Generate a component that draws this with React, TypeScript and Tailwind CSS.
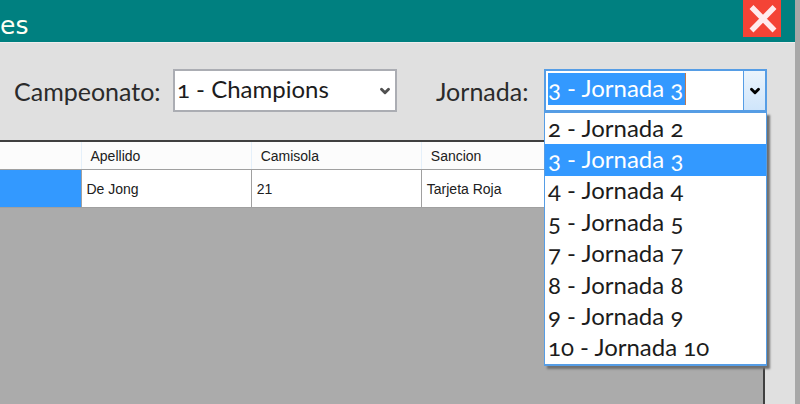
import { ChevronDown } from "lucide-react";

const columns = ["Apellido", "Camisola", "Sancion"];
const player = ["De Jong", "21", "Tarjeta Roja"];
const rounds = [2, 3, 4, 5, 7, 8, 9, 10];
const selectedRound = 3;

function TitleBar() {
  return (
    <header className="flex h-[42px] items-start justify-between bg-[#008080] pr-[14px]">
      <h1 className="pt-[10px] font-['DejaVu_Sans',sans-serif] text-[25px] leading-8 text-[#fffff4]">es</h1>
      <button
        type="button"
        aria-label="Cerrar"
        className="flex h-[37px] w-[38px] items-center justify-center bg-[#f44336]"
      >
        <svg viewBox="0 0 38 37" className="h-full w-full" fill="none" stroke="#ffebee" strokeWidth="5.5">
          <path d="M8.5 7 31.5 30.5M31.5 7 8.5 30.5" />
        </svg>
      </button>
    </header>
  );
}

function ChampionshipField() {
  return (
    <div className="flex items-center gap-[11px]">
      <label htmlFor="campeonato" className="w-[148px] whitespace-nowrap">Campeonato:</label>
      <div className="grid w-[224px] items-center">
        <select
          id="campeonato"
          className="col-start-1 row-start-1 h-[43px] appearance-none border-2 border-[#abadb3] bg-white px-[2px] pb-[3px] text-[24px] text-[#1c1c1c] outline-none"
        >
          <option>1 - Champions</option>
        </select>
        <ChevronDown
          className="pointer-events-none col-start-1 row-start-1 mr-[5px] size-[14px] justify-self-end text-[#505050]"
          strokeWidth={5}
        />
      </div>
    </div>
  );
}

function RoundField() {
  return (
    <div className="flex items-center gap-[11px]">
      <label htmlFor="jornada" className="w-[97px] whitespace-nowrap">Jornada:</label>
      <div className="relative w-[223px] text-[24px]">
        <div className="flex h-[43px] border-2 border-[#569de5] bg-white">
          <div className="flex-1 p-[2px]">
            <input
              id="jornada"
              type="text"
              role="combobox"
              aria-expanded="true"
              aria-controls="jornadas"
              defaultValue={`${selectedRound} - Jornada ${selectedRound}`}
              className="block h-8 w-[138px] border-r border-[#c07850] bg-[#3399ff] pb-[2px] text-white outline-none"
            />
          </div>
          <button
            type="button"
            aria-label="Abrir jornadas"
            className="flex w-[22px] items-center justify-center border-l border-[#569de5] bg-linear-to-b from-[#ebf4fc] to-[#cfe5fb]"
          >
            <ChevronDown className="size-[14px] text-black" strokeWidth={5} />
          </button>
        </div>
        <ul
          id="jornadas"
          role="listbox"
          aria-label="Jornadas"
          className="absolute top-full left-0 z-10 grid h-[254px] w-full auto-rows-fr border border-b-2 border-[#569de5] bg-white shadow-[3px_3px_2px_#707070]"
        >
          {rounds.map((round) => (
            <li
              key={round}
              role="option"
              aria-selected={round === selectedRound}
              className="flex items-center px-[3px] pb-[2px] leading-7 whitespace-nowrap text-[#1c1c1c] aria-selected:bg-[#3399ff] aria-selected:text-white"
            >
              {round} - Jornada {round}
            </li>
          ))}
        </ul>
      </div>
    </div>
  );
}

function PlayersTable() {
  return (
    <div className="mr-[30px] flex-1 border-t-2 border-r-2 border-[#404040] bg-[#ababab]">
      <table className="w-[592px] table-fixed border-collapse bg-white font-['Liberation_Sans',Arial,sans-serif] text-[14px] leading-4 text-[#202020]">
        <thead>
          <tr className="h-[27px] bg-[#fcfcfc]">
            <th className="w-[81px] border-b border-[#a0a0a0]" aria-label="Nombre" />
            {columns.map((column) => (
              <th
                key={column}
                className="border-b border-l border-b-[#a0a0a0] border-l-[#e5f0fa] px-[9px] pt-[2px] text-left font-normal"
              >
                {column}
              </th>
            ))}
          </tr>
        </thead>
        <tbody>
          <tr className="h-[38px]">
            <td className="border-r border-b border-[#a0a0a0] bg-[#3399ff]" />
            {player.map((value) => (
              <td key={value} className="border-r border-b border-[#a0a0a0] px-[5px] pt-[2px]">
                {value}
              </td>
            ))}
          </tr>
        </tbody>
      </table>
    </div>
  );
}

export default function App() {
  return (
    <div className="flex min-h-screen bg-[#a8a8a8] pr-[5px]">
      <main className="flex flex-1 flex-col bg-[#e0e0e0]">
        <TitleBar />
        <form className="flex justify-between border-t border-[#eeeeee] pt-[26px] pr-7 pb-7 pl-[14px] font-['Lato',Corbel,sans-serif] text-[25px] leading-8 text-[#2b2b2b] oldstyle-nums">
          <ChampionshipField />
          <RoundField />
        </form>
        <PlayersTable />
      </main>
    </div>
  );
}
